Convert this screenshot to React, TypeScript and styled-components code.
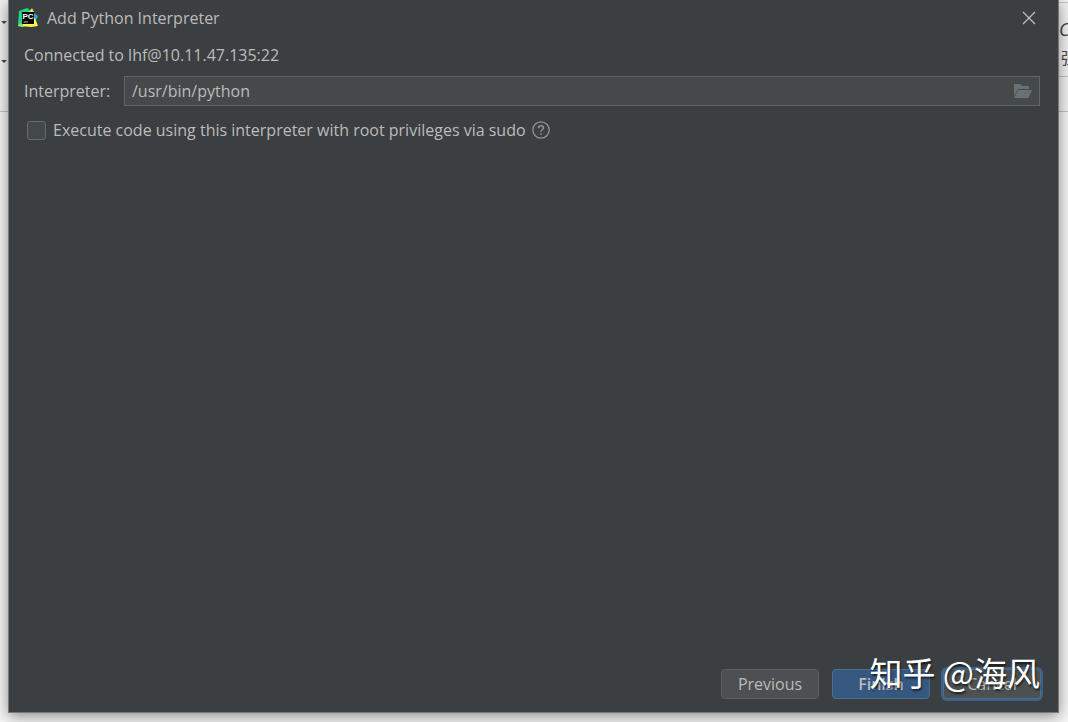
import React, { useState } from "react";
import styled, { createGlobalStyle } from "styled-components";

const GlobalStyle = createGlobalStyle`
  * { box-sizing: border-box; }
  body {
    margin: 0;
    background: #f6f6f6;
    color: #bbbbbb;
    font-family: "Open Sans", "Noto Sans CJK SC", sans-serif;
    font-size: 16px;
    line-height: 24px;
  }
  button, input { font: inherit; color: inherit; }
`;

const Desktop = styled.div`
  display: grid;
  grid-template-columns: 8px minmax(0, 1fr) 9px;
  min-height: 100vh;
  padding-bottom: 9px;
  overflow: hidden;
`;

const Backdrop = styled.div`
  display: flex;
  flex-direction: column;
  min-width: 0;
`;

const Strip = styled.div<{ $height: number }>`
  display: flex;
  flex-direction: column;
  align-items: flex-end;
  height: ${(p) => p.$height}px;
  border-bottom: 1px solid #c4c4c4;
  background: #f2f2f2;
  overflow: hidden;
  color: #444444;
`;

const LeftStrip = styled(Strip)`
  gap: 36px;
  padding: 21px 1px 0 0;
`;

const GlyphStrip = styled(Strip)`
  padding-top: 12px;
`;

const GlyphRow = styled.span<{ $italic?: boolean }>`
  flex: none;
  width: 9px;
  height: 29px;
  padding-left: ${(p) => (p.$italic ? 0 : 2)}px;
  line-height: 29px;
  font-size: ${(p) => (p.$italic ? 18 : 16)}px;
  font-style: ${(p) => (p.$italic ? "italic" : "normal")};
  white-space: nowrap;
  overflow: hidden;
`;

const Dialog = styled.main`
  position: relative;
  display: flex;
  flex-direction: column;
  background: #3c3f41;
  border: 1px solid #77797a;
  border-top: 0;
  box-shadow: 0 3px 14px rgba(0, 0, 0, 0.45);
`;

const TitleBar = styled.header`
  display: flex;
  align-items: center;
  gap: 9px;
  height: 36px;
  padding: 0 22px 0 9px;
`;

const Title = styled.h1`
  flex: 1;
  margin: 0;
  font-size: 16px;
  font-weight: 400;
`;

const IconButton = styled.button`
  display: flex;
  padding: 0;
  border: 0;
  background: none;
`;

const Content = styled.section`
  flex: 1;
  display: flex;
  flex-direction: column;
  padding: 7px 18px 0 15px;
`;

const Status = styled.p`
  margin: 0 0 9px;
`;

const FieldRow = styled.div`
  display: flex;
  align-items: center;
`;

const FieldLabel = styled.label`
  width: 100px;
`;

const PathField = styled.div`
  flex: 1;
  display: flex;
  align-items: center;
  height: 30px;
  padding: 0 7px;
  border: 1px solid #646464;
  background: #45494a;
`;

const PathInput = styled.input`
  flex: 1;
  min-width: 0;
  padding: 0;
  border: 0;
  outline: 0;
  background: none;
`;

const OptionRow = styled.div`
  display: flex;
  align-items: center;
  gap: 6px;
  padding: 12px 0 0 3px;
`;

const OptionLabel = styled.label`
  display: flex;
  align-items: center;
  gap: 7px;
`;

const CheckBox = styled.input`
  appearance: none;
  width: 19px;
  height: 19px;
  margin: 0;
  border: 1px solid #6b6b6b;
  border-radius: 3px;
  background: #43494a;
  &:checked { background: #365880; }
`;

const Actions = styled.footer`
  display: flex;
  justify-content: flex-end;
  gap: 13px;
  padding: 0 17px 13px;
`;

const Button = styled.button<{ $primary?: boolean; $focused?: boolean }>`
  width: 98px;
  height: 30px;
  padding: 0;
  border: 1px solid ${(p) => (p.$primary ? "#4c708c" : p.$focused ? "#466d94" : "#5e6060")};
  border-radius: 4px;
  background: ${(p) => (p.$primary ? "#365880" : "#4c5052")};
  font-weight: ${(p) => (p.$primary ? 600 : 400)};
  box-shadow: ${(p) => (p.$focused ? "0 0 0 2px #3d6185" : "none")};
`;

const Watermark = styled.span`
  position: absolute;
  right: 18px;
  bottom: 16px;
  color: #ffffff;
  font-family: "Noto Sans CJK SC", sans-serif;
  font-size: 33px;
  line-height: 48px;
  white-space: pre;
  text-shadow: 1px 2px 2px rgba(0, 0, 0, 0.6);
  pointer-events: none;
`;

const Caret = () => (
  <svg width="6" height="3" viewBox="0 0 6 3" aria-hidden="true">
    <path d="M0 0h6L3 3z" fill="#4a4a4a" />
  </svg>
);

const AppLogo = () => (
  <svg width="20" height="20" viewBox="0 0 20 20" aria-hidden="true">
    <path d="M1 3 9 0l3 2 4 2-3 13-9 2-4-1z" fill="#24d184" />
    <path d="m14 0 2 4h-5z" fill="#d9ef63" />
    <path d="m16 5 4 3-2 4h-4z" fill="#16aee1" />
    <path d="m17 10 3 8-7 1-9-1 2-4z" fill="#f8f44b" />
    <path d="m0 18 2-3 4 4z" fill="#9be85b" />
    <path d="M4 4h12v12H4z" fill="#000" />
    <text x="4.500" y="10.500" fill="#fff" fontFamily="Liberation Sans, sans-serif" fontWeight="700" fontSize="8">PC</text>
    <path d="M5.500 14H10" stroke="#bbb" />
  </svg>
);

const CloseIcon = () => (
  <svg width="14" height="14" viewBox="0 0 14 14" aria-hidden="true">
    <path d="m1 1 12 12M13 1 1 13" stroke="#bcbdbd" strokeWidth="1.300" />
  </svg>
);

const FolderIcon = () => (
  <svg width="18" height="14" viewBox="0 0 18 14" aria-hidden="true">
    <path d="M0 0h6l2 2h7v3H4L0 12z" fill="#6a7175" />
    <path d="M4 6h14l-3.500 8H0z" fill="#6a7175" />
  </svg>
);

const HelpIcon = () => (
  <svg width="18" height="18" viewBox="0 0 18 18" fill="none" stroke="#929495" aria-hidden="true">
    <circle cx="9" cy="9" r="8.200" strokeWidth="1.300" />
    <path d="M6.500 7.200C6.500 5.500 7.500 4.700 9 4.700s2.500.8 2.500 2.200C11.500 8.500 9 8.600 9 10.800M9 12.200v1.600" strokeWidth="1.500" />
  </svg>
);

export default function App() {
  const [path, setPath] = useState("/usr/bin/python");
  const [sudo, setSudo] = useState(false);

  return (
    <>
      <GlobalStyle />
      <Desktop>
        <Backdrop>
          <LeftStrip $height={112}>
            <Caret />
            <Caret />
          </LeftStrip>
        </Backdrop>
        <Dialog>
          <TitleBar>
            <AppLogo />
            <Title>Add Python Interpreter</Title>
            <IconButton type="button" aria-label="Close">
              <CloseIcon />
            </IconButton>
          </TitleBar>
          <Content>
            <Status>Connected to lhf@10.11.47.135:22</Status>
            <FieldRow>
              <FieldLabel htmlFor="interpreter">Interpreter:</FieldLabel>
              <PathField>
                <PathInput id="interpreter" value={path} onChange={(e) => setPath(e.target.value)} />
                <IconButton type="button" aria-label="Browse">
                  <FolderIcon />
                </IconButton>
              </PathField>
            </FieldRow>
            <OptionRow>
              <OptionLabel>
                <CheckBox type="checkbox" checked={sudo} onChange={(e) => setSudo(e.target.checked)} />
                Execute code using this interpreter with root privileges via sudo
              </OptionLabel>
              <IconButton type="button" aria-label="Help">
                <HelpIcon />
              </IconButton>
            </OptionRow>
          </Content>
          <Actions>
            <Button type="button">Previous</Button>
            <Button type="button" $primary>Finish</Button>
            <Button type="button" $focused>Cancel</Button>
          </Actions>
          <Watermark>知乎 @海风</Watermark>
        </Dialog>
        <Backdrop>
          <Strip $height={3} />
          <GlyphStrip $height={74}>
            <GlyphRow $italic>C</GlyphRow>
            <GlyphRow>强</GlyphRow>
          </GlyphStrip>
          <Strip $height={35} />
        </Backdrop>
      </Desktop>
    </>
  );
}
